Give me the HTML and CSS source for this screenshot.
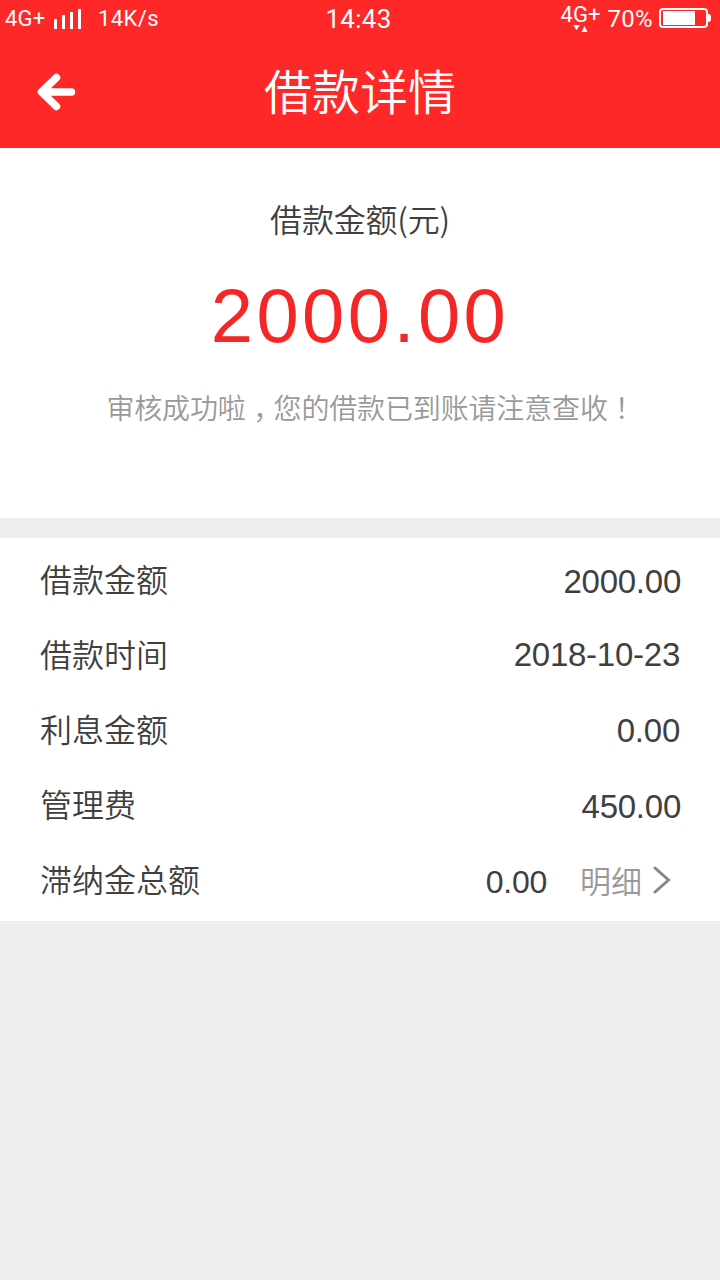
FILE: index.html
```html
<!DOCTYPE html>
<html lang="zh-CN">
  <head>
    <meta charset="UTF-8" />
    <meta name="viewport" content="width=device-width, initial-scale=1.0" />
    <title>借款详情</title>
    <link rel="stylesheet" href="styles.css">
  </head>
  <body>
    <header class="header">
      <div class="status">
        <div class="statusLeft">
          <span class="net">4G+</span>
          <svg class="signal" width="28" height="20" viewBox="0 0 28 20" fill="#fff">
            <path d="M0 10h3v10H0zM8 6h3v14H8zM16 3h3v17h-3zM24 0h3v20h-3z" />
          </svg>
          <span class="speed">14K/s</span>
        </div>
        <div class="time">14:43</div>
        <div class="statusRight">
          <div class="netBox">
            <span class="netSmall">4G+</span>
            <svg class="arrows" width="16" height="7" viewBox="0 0 16 7" fill="#fff">
              <path d="M0 0h7L3.500 5zM8.500 7h6L11.500 1z" />
            </svg>
          </div>
          <span class="percent">70%</span>
          <svg class="battery" width="52" height="20" viewBox="0 0 52 20">
            <rect x="1" y="1" width="47" height="18" rx="3" fill="none" stroke="#fff" stroke-width="2" />
            <path d="M4 3h32v14H4zM49 6h1.500l1.500 2v4l-1.500 2H49z" fill="#fff" />
          </svg>
        </div>
      </div>
      <div class="nav">
        <svg class="back" width="40" height="40" viewBox="0 0 40 40" fill="none" stroke="#fff" stroke-width="7.500" stroke-linecap="round" stroke-linejoin="round">
          <path d="M20.500 5.500L5.500 20L20.500 34.500M6 20H35.500" />
        </svg>
        <h1 class="title">借款详情</h1>
      </div>
    </header>

    <section class="summary">
      <div class="summaryLabel">借款金额(元)</div>
      <div class="amount">2000.00</div>
      <p class="tip">审核成功啦<span class="comma" lang="zh-TW">，</span>您的借款已到账请注意查收<span class="mark" lang="zh-TW">！</span></p>
    </section>

    <section class="list">
      <div class="row">
        <span class="label">借款金额</span>
        <span class="value">2000.00</span>
      </div>
      <div class="row">
        <span class="label">借款时间</span>
        <span class="value date">2018-10-23</span>
      </div>
      <div class="row">
        <span class="label">利息金额</span>
        <span class="value interest">0.00</span>
      </div>
      <div class="row">
        <span class="label">管理费</span>
        <span class="value">450.00</span>
      </div>
      <div class="row">
        <span class="label">滞纳金总额</span>
        <span class="value late">0.00</span>
        <a class="more">明细
          <svg class="chevron" width="18" height="30" viewBox="0 0 18 30" fill="none" stroke="#858585" stroke-width="3" stroke-linecap="round">
            <path d="M2 3L15.500 15L2 27" />
          </svg>
        </a>
      </div>
    </section>
  </body>
</html>
```

FILE: styles.css
```css
* {
  box-sizing: border-box;
}
body {
  margin: 0;
  background: #ededed;
  color: #3f3f3f;
  font-family: "Liberation Sans", "Noto Sans CJK SC", sans-serif;
}
.header {
  height: 148px;
  background: #ff2828;
  color: #fff;
}
.status {
  display: grid;
  grid-template-columns: 1fr auto 1fr;
  height: 38px;
  padding: 0 9px 0 5px;
  font-family: Roboto, sans-serif;
  line-height: 38px;
}
.statusLeft {
  display: flex;
  font-size: 22px;
}
.net {
  width: 49px;
  letter-spacing: 0.2px;
}
.signal {
  margin-top: 9px;
}
.speed {
  margin-left: 16px;
  letter-spacing: 0.4px;
}
.time {
  padding-left: 1px;
  font-size: 26px;
  letter-spacing: 0.3px;
}
.statusRight {
  display: flex;
  justify-content: flex-end;
}
.netBox {
  display: flex;
  flex-direction: column;
  align-items: center;
  width: 42px;
}
.netSmall {
  font-size: 22px;
  line-height: 25px;
  margin-top: 2px;
}
.arrows {
  margin-top: -2px;
}
.percent {
  margin: 0 6px 0 6px;
  font-size: 24px;
  letter-spacing: 0.3px;
}
.battery {
  margin-top: 8px;
}
.nav {
  display: grid;
  grid-template-columns: 40px 1fr 40px;
  align-items: center;
  height: 110px;
  padding: 0 36px;
}
.back {
  margin-top: -2px;
}
.title {
  margin: 0;
  padding-bottom: 9px;
  font-size: 48px;
  font-weight: 350;
  text-align: center;
}
.summary {
  height: 370px;
  margin-bottom: 20px;
  padding-top: 46px;
  background: #fff;
  text-align: center;
}
.summaryLabel {
  font-family: "Noto Sans CJK SC", sans-serif;
  font-size: 32px;
  font-weight: 350;
  letter-spacing: -0.2px;
  line-height: 48px;
}
.amount {
  margin-top: 32px;
  color: #f52626;
  font-size: 76px;
  letter-spacing: 3.4px;
  line-height: 84px;
}
.tip {
  margin: 28px 0 0;
  padding-left: 22px;
  color: #999;
  font-size: 28px;
  font-weight: 350;
  letter-spacing: -0.150px;
  line-height: 42px;
}
.comma,
.mark {
  font-family: "Noto Sans CJK TC", sans-serif;
}
.comma {
  line-height: 1;
  vertical-align: -9px;
}
.list {
  height: 383px;
  padding: 4px 39px 0 40px;
  background: #fff;
}
.row {
  display: flex;
  align-items: center;
  height: 75px;
}
.label {
  flex: 1;
  padding-bottom: 3px;
  font-size: 32px;
  font-weight: 350;
}
.value {
  padding-top: 5px;
  font-size: 33px;
  letter-spacing: -0.25px;
  line-height: 38px;
}
.date {
  padding: 0 1px 0 0;
}
.interest {
  padding: 3px 1px 0 0;
}
.late {
  font-size: 32px;
}
.more {
  display: flex;
  align-items: center;
  margin: 0 10px 0 33px;
  color: #999;
  font-size: 31px;
  font-weight: 350;
}
.chevron {
  margin-left: 11px;
}
```
